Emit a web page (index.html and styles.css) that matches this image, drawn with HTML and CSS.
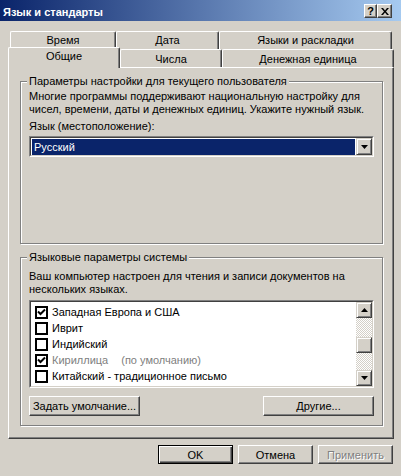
FILE: index.html
```html
<!DOCTYPE html>
<html lang="ru">
<head>
    <meta charset="UTF-8">
    <title>Язык и стандарты</title>
    <link rel="stylesheet" href="styles.css">
</head>
<body>
    <div class="window">
        <div class="titlebar">
            <span class="title">Язык и стандарты</span>
            <div class="caption-buttons">
                <span class="cap-btn help">?</span>
                <span class="cap-btn close">
                    <svg width="8" height="7" viewBox="0 0 8 7"><path d="M0 0h2l2 2.5L6 0h2L5 3.5 8 7H6L4 4.5 2 7H0l3-3.5z" fill="#000"/></svg>
                </span>
            </div>
        </div>

        <div class="tabs">
            <div class="tab-row back">
                <div class="tab t-time">Время</div>
                <div class="tab t-date">Дата</div>
                <div class="tab t-lang">Языки и раскладки</div>
            </div>
            <div class="tab-row front">
                <div class="tab active t-general">Общие</div>
                <div class="tab t-num">Числа</div>
                <div class="tab t-money">Денежная единица</div>
            </div>
        </div>

        <div class="panel">
            <div class="group g-user">
                <div class="legend">Параметры настройки для текущего пользователя</div>
                <p class="note">Многие программы поддерживают национальную настройку для<br>чисел, времени, даты и денежных единиц. Укажите нужный язык.</p>
                <div class="label">Язык (местоположение):</div>
                <div class="combo">
                    <div class="combo-inner">
                        <div class="combo-field"><div class="combo-value">Русский</div></div>
                        <div class="sb-btn">
                            <svg width="7" height="4" viewBox="0 0 7 4"><path d="M0 0h7L3.5 4z" fill="#000"/></svg>
                        </div>
                    </div>
                </div>
            </div>

            <div class="group g-system">
                <div class="legend">Языковые параметры системы</div>
                <p class="note">Ваш компьютер настроен для чтения и записи документов на<br>нескольких языках.</p>
                <div class="list">
                    <div class="list-inner">
                        <div class="items">
                            <div class="item"><span class="check on"><svg width="9" height="9" viewBox="0 0 9 9"><path d="M1 3.5l2.5 2.5L8 1.5" stroke="#000" stroke-width="2" fill="none"/></svg></span>Западная Европа и США</div>
                            <div class="item"><span class="check"></span>Иврит</div>
                            <div class="item"><span class="check"></span>Индийский</div>
                            <div class="item muted"><span class="check on"><svg width="9" height="9" viewBox="0 0 9 9"><path d="M1 3.5l2.5 2.5L8 1.5" stroke="#000" stroke-width="2" fill="none"/></svg></span>Кириллица<span class="default-mark">(по умолчанию)</span></div>
                            <div class="item"><span class="check"></span>Китайский - традиционное письмо</div>
                        </div>
                        <div class="scrollbar">
                            <div class="sb-btn">
                                <svg width="7" height="4" viewBox="0 0 7 4"><path d="M0 4h7L3.5 0z" fill="#000"/></svg>
                            </div>
                            <div class="sb-track"><div class="sb-thumb"></div></div>
                            <div class="sb-btn">
                                <svg width="7" height="4" viewBox="0 0 7 4"><path d="M0 0h7L3.5 4z" fill="#000"/></svg>
                            </div>
                        </div>
                    </div>
                </div>
                <div class="group-buttons">
                    <button class="btn">Задать умолчание...</button>
                    <button class="btn">Другие...</button>
                </div>
            </div>
        </div>

        <div class="dialog-buttons">
            <button class="btn default">OK</button>
            <button class="btn">Отмена</button>
            <button class="btn disabled">Применить</button>
        </div>
    </div>
</body>
</html>
```

FILE: styles.css
```css
body {
    margin: 0;
    background: #d4d0c8;
    font-family: 'Liberation Sans', Arial, sans-serif;
    font-size: 11px;
    color: #000;
}

.window {
    width: 401px;
    height: 476px;
    background: #d4d0c8;
    overflow: hidden;
}

/* Title bar */
.titlebar {
    height: 21px;
    display: flex;
    justify-content: space-between;
    background: linear-gradient(to right, #0a246a, #a6caf0);
    padding-left: 3px;
}

.title {
    color: #fff;
    font-weight: bold;
    line-height: 13px;
    padding-top: 6px;
}

.caption-buttons {
    display: flex;
    margin: 4px 9px 0 0;
    gap: 0;
}

.cap-btn {
    box-sizing: border-box;
    width: 14px;
    height: 14px;
    background: #d4d0c8;
    border: 1px solid;
    border-color: #fff #404040 #404040 #fff;
    box-shadow: inset -1px -1px #808080;
    display: flex;
    align-items: center;
    justify-content: center;
}

.cap-btn.help {
    width: 13px;
    font-weight: bold;
    font-size: 11px;
    line-height: 11px;
}

.cap-btn.close {
    width: 15px;
}

/* Tabs */
.tab-row {
    display: flex;
    height: 18px;
}

.tab-row.back {
    margin-top: 10px;
    padding-left: 10px;
}

.tab-row.front {
    padding-left: 8px;
}

.tab {
    box-sizing: border-box;
    height: 18px;
    border-top: 1px solid #fff;
    border-left: 1px solid #fff;
    border-right: 1px solid #404040;
    border-radius: 2px 2px 0 0;
    box-shadow: inset -1px 0 #808080;
    background: #d4d0c8;
    text-align: center;
    line-height: 13px;
    padding-top: 2px;
}

.front .tab {
    padding-top: 3px;
}

.front .tab.active {
    position: relative;
    z-index: 1;
    height: 21px;
    margin-top: -2px;
    padding-top: 2px;
}

.t-time { width: 106px; }
.t-date { width: 103px; }
.t-lang { width: 173px; }
.t-general { width: 112px; }
.t-num { width: 102px; }
.t-money { width: 172px; }

/* Tab page */
.panel {
    box-sizing: border-box;
    width: 386px;
    height: 372px;
    margin-left: 8px;
    border-top: 1px solid #fff;
    border-left: 1px solid #fff;
    border-right: 1px solid #404040;
    border-bottom: 1px solid #404040;
    box-shadow: inset -1px -1px #808080;
    padding: 13px 0 0 11px;
}

.group {
    box-sizing: border-box;
    width: 363px;
    border: 1px solid #808080;
    box-shadow: inset 1px 1px #fff, 1px 1px #fff;
    padding: 0 8px;
}

.g-user {
    height: 163px;
}

.g-system {
    height: 169px;
    margin-top: 13px;
}

.legend {
    width: fit-content;
    margin: -7px 0 0 -2px;
    padding: 0 2px;
    background: #d4d0c8;
    line-height: 13px;
}

.note {
    margin: 2px 0 0;
    line-height: 13px;
}

.g-system .note {
    margin-top: 6px;
}

.label {
    margin-top: 4px;
    line-height: 13px;
}

/* Combo box */
.combo {
    box-sizing: border-box;
    height: 21px;
    margin-top: 3px;
    border: 1px solid;
    border-color: #808080 #fff #fff #808080;
}

.combo-inner {
    box-sizing: border-box;
    height: 100%;
    display: flex;
    border: 1px solid;
    border-color: #404040 #d4d0c8 #d4d0c8 #404040;
    background: #fff;
}

.combo-field {
    flex: 1;
    padding: 1px 1px 0 1px;
}

.combo-value {
    background: #0a246a;
    color: #fff;
    height: 16px;
    line-height: 16px;
    padding-left: 2px;
}

.sb-btn {
    box-sizing: border-box;
    width: 16px;
    height: 16px;
    background: #d4d0c8;
    border: 1px solid;
    border-color: #d4d0c8 #404040 #404040 #d4d0c8;
    box-shadow: inset 1px 1px #fff, inset -1px -1px #808080;
    display: flex;
    align-items: center;
    justify-content: center;
}

.combo .sb-btn {
    height: 17px;
}

/* List with checkboxes */
.list {
    box-sizing: border-box;
    height: 88px;
    margin-top: 4px;
    border: 1px solid;
    border-color: #808080 #fff #fff #808080;
}

.list-inner {
    box-sizing: border-box;
    height: 100%;
    display: flex;
    border: 1px solid;
    border-color: #404040 #d4d0c8 #d4d0c8 #404040;
    background: #fff;
}

.items {
    flex: 1;
    padding: 2px 0 0 4px;
}

.item {
    height: 16px;
    line-height: 16px;
    display: flex;
    align-items: center;
}

.item.muted {
    color: #808080;
}

.check {
    box-sizing: border-box;
    width: 13px;
    height: 13px;
    border: 2px solid #000;
    background: #fff;
    margin-right: 4px;
    display: flex;
}

.default-mark {
    margin-left: 13px;
}

.scrollbar {
    width: 16px;
    display: flex;
    flex-direction: column;
}

.sb-track {
    flex: 1;
    background: repeating-conic-gradient(#fff 0 25%, #d4d0c8 0 50%) 0 0 / 2px 2px;
}

.sb-thumb {
    box-sizing: border-box;
    height: 16px;
    margin-top: 19px;
    background: #d4d0c8;
    border: 1px solid;
    border-color: #d4d0c8 #404040 #404040 #d4d0c8;
    box-shadow: inset 1px 1px #fff, inset -1px -1px #808080;
}

/* Buttons */
.btn {
    box-sizing: border-box;
    height: 20px;
    padding: 0;
    font-family: inherit;
    font-size: 11px;
    color: #000;
    background: #d4d0c8;
    border: 1px solid;
    border-color: #fff #404040 #404040 #fff;
    box-shadow: inset -1px -1px #808080;
}

.group-buttons {
    display: flex;
    justify-content: space-between;
    margin-top: 8px;
}

.group-buttons .btn {
    width: 111px;
}

.dialog-buttons {
    display: flex;
    justify-content: flex-end;
    gap: 5px;
    margin-top: 6px;
    padding-right: 8px;
}

.dialog-buttons .btn {
    width: 75px;
    height: 19px;
}

.btn.default {
    border: 1px solid #000;
    box-shadow: inset 1px 1px #fff, inset -1px -1px #404040, inset -2px -2px #808080;
}

.btn.disabled {
    color: #808080;
    text-shadow: 1px 1px #fff;
}
```
